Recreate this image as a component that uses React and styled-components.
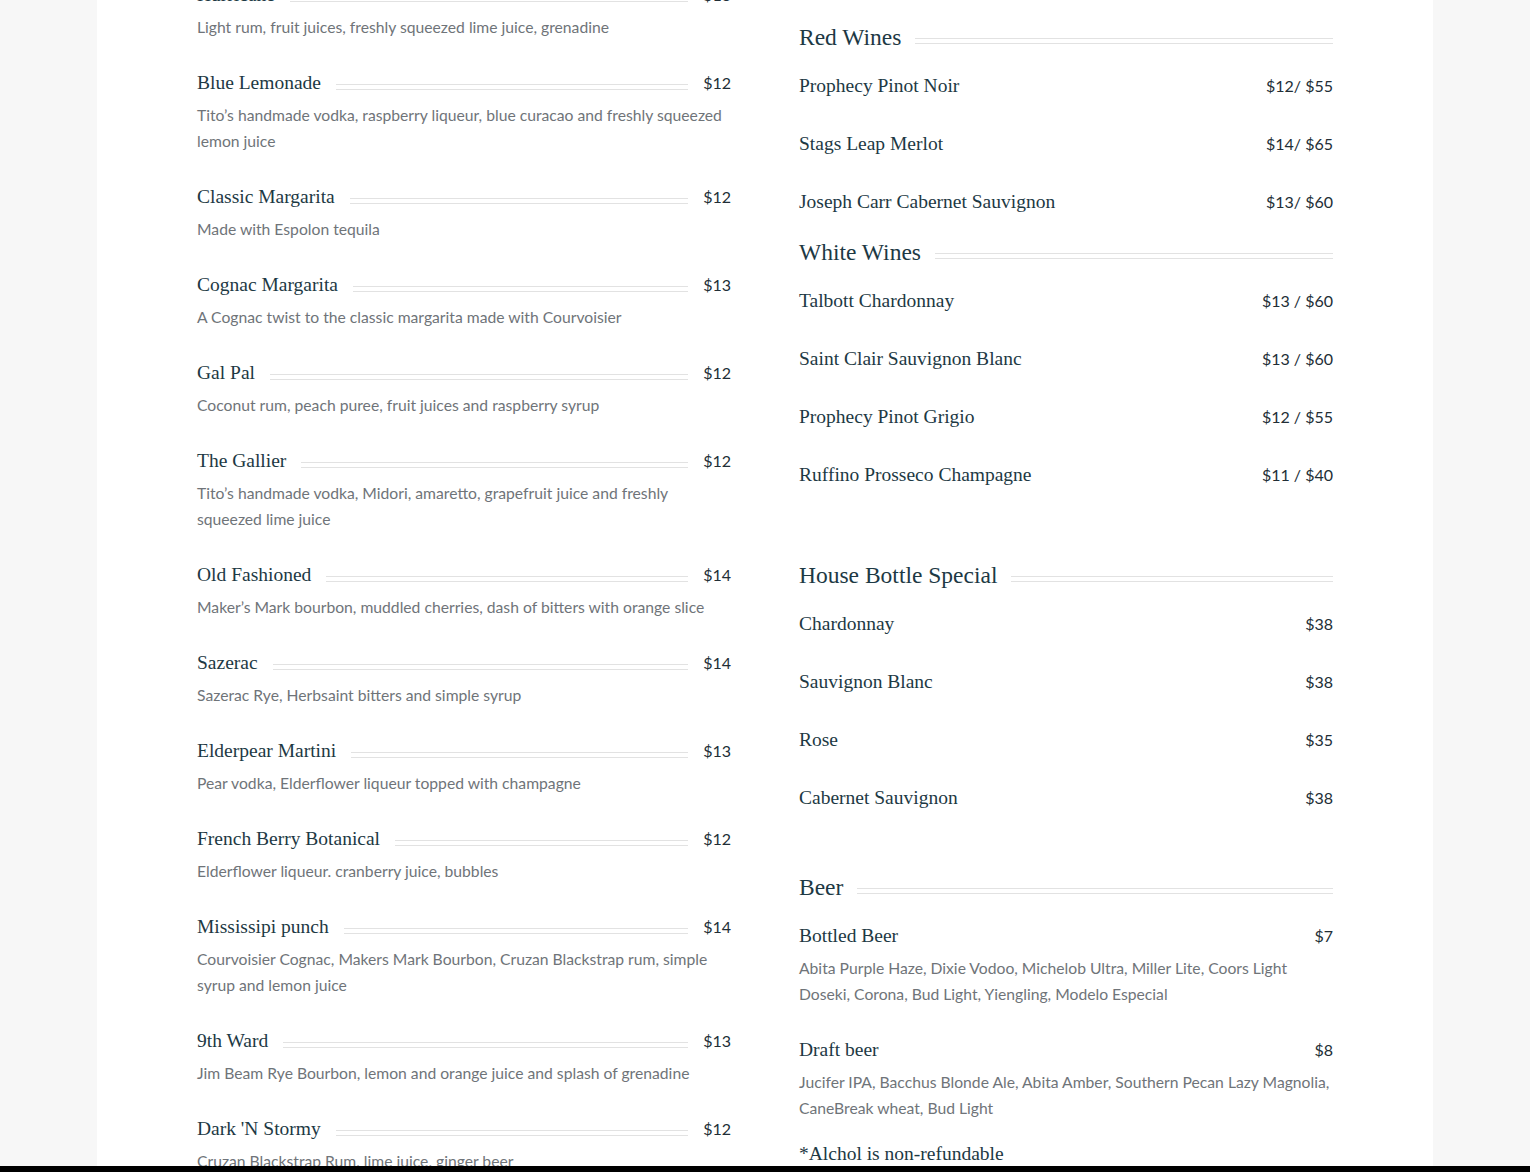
import React from 'react';
import styled, { createGlobalStyle } from 'styled-components';

const GlobalStyle = createGlobalStyle`
  html, body {
    margin: 0;
    padding: 0;
    background: #f7f7f7;
  }
  * {
    box-sizing: border-box;
  }
`;

const Viewport = styled.div`
  height: 1166px;
  overflow: hidden;
`;

const Card = styled.main`
  width: 1336px;
  min-height: 100%;
  margin: 0 auto;
  padding: 0 100px;
  background: #ffffff;
`;

const Columns = styled.div`
  display: grid;
  grid-template-columns: 1fr 1fr;
  column-gap: 68px;
  /* page is scrolled a little past the top */
  margin-top: -20px;
`;

const Column = styled.div`
  display: flex;
  flex-direction: column;
  padding-top: ${(p) => p.$offset || 0}px;
`;

const Section = styled.section`
  margin-top: ${(p) => p.$space || 0}px;
`;

const Heading = styled.div`
  display: flex;
  align-items: center;
  margin-bottom: 16px;
  height: 36px;
`;

const HeadingText = styled.h2`
  margin: 0;
  font-family: 'Liberation Serif', 'Times New Roman', serif;
  font-weight: 400;
  font-size: 23.5px;
  line-height: 36px;
  color: #1d3944;
  white-space: nowrap;
`;

const Leader = styled.span`
  flex: 1;
  height: 6px;
  margin: 8px 15px 0 ${(p) => (p.$heading ? 14 : 15)}px;
  border-top: ${(p) => (p.$plain ? 'none' : '1px solid #e2e2e2')};
  border-bottom: ${(p) => (p.$plain ? 'none' : '1px solid #e2e2e2')};
  ${(p) => p.$heading && 'margin-right: 0;'}
`;

const Item = styled.div`
  margin-bottom: 28px;
  &:last-child {
    margin-bottom: 0;
  }
`;

const NameRow = styled.div`
  display: flex;
  align-items: center;
  height: 30px;
`;

const Name = styled.h3`
  margin: 0;
  font-family: 'Liberation Serif', 'Times New Roman', serif;
  font-weight: 400;
  font-size: 19.5px;
  line-height: 30px;
  color: #1d3944;
  white-space: nowrap;
`;

const Price = styled.span`
  font-family: Lato, 'Liberation Sans', sans-serif;
  font-size: 16px;
  line-height: 30px;
  color: #222e36;
  white-space: nowrap;
`;

const Description = styled.p`
  margin: 4px 0 0;
  font-family: Lato, 'Liberation Sans', sans-serif;
  font-size: 15.7px;
  line-height: 26px;
  color: #6f7479;
`;

const Note = styled.p`
  margin: 18px 0 0;
  font-family: 'Liberation Serif', 'Times New Roman', serif;
  font-size: 19.5px;
  line-height: 30px;
  color: #1d3944;
`;

const Footer = styled.footer`
  height: 6px;
  background: #000000;
`;

const cocktails = [
  { name: 'Hurricane', price: '$13', desc: 'Light rum, fruit juices, freshly squeezed lime juice, grenadine' },
  { name: 'Blue Lemonade', price: '$12', desc: 'Tito’s handmade vodka, raspberry liqueur, blue curacao and freshly squeezed lemon juice' },
  { name: 'Classic Margarita', price: '$12', desc: 'Made with Espolon tequila' },
  { name: 'Cognac Margarita', price: '$13', desc: 'A Cognac twist to the classic margarita made with Courvoisier' },
  { name: 'Gal Pal', price: '$12', desc: 'Coconut rum, peach puree, fruit juices and raspberry syrup' },
  { name: 'The Gallier', price: '$12', desc: 'Tito’s handmade vodka, Midori, amaretto, grapefruit juice and freshly squeezed lime juice' },
  { name: 'Old Fashioned', price: '$14', desc: 'Maker’s Mark bourbon, muddled cherries, dash of bitters with orange slice' },
  { name: 'Sazerac', price: '$14', desc: 'Sazerac Rye, Herbsaint bitters and simple syrup' },
  { name: 'Elderpear Martini', price: '$13', desc: 'Pear vodka, Elderflower liqueur topped with champagne' },
  { name: 'French Berry Botanical', price: '$12', desc: 'Elderflower liqueur. cranberry juice, bubbles' },
  { name: 'Mississipi punch', price: '$14', desc: 'Courvoisier Cognac, Makers Mark Bourbon, Cruzan Blackstrap rum, simple syrup and lemon juice' },
  { name: '9th Ward', price: '$13', desc: 'Jim Beam Rye Bourbon, lemon and orange juice and splash of grenadine' },
  { name: "Dark 'N Stormy", price: '$12', desc: 'Cruzan Blackstrap Rum, lime juice, ginger beer' },
];

const sections = [
  {
    title: 'Red Wines',
    space: 0,
    items: [
      { name: 'Prophecy Pinot Noir', price: '$12/ $55' },
      { name: 'Stags Leap Merlot', price: '$14/ $65' },
      { name: 'Joseph Carr Cabernet Sauvignon', price: '$13/ $60' },
    ],
  },
  {
    title: 'White Wines',
    space: 17,
    items: [
      { name: 'Talbott Chardonnay', price: '$13 / $60' },
      { name: 'Saint Clair Sauvignon Blanc', price: '$13 / $60' },
      { name: 'Prophecy Pinot Grigio', price: '$12 / $55' },
      { name: 'Ruffino Prosseco Champagne', price: '$11 / $40' },
    ],
  },
  {
    title: 'House Bottle Special',
    space: 67,
    items: [
      { name: 'Chardonnay', price: '$38' },
      { name: 'Sauvignon Blanc', price: '$38' },
      { name: 'Rose', price: '$35' },
      { name: 'Cabernet Sauvignon', price: '$38' },
    ],
  },
  {
    title: 'Beer',
    space: 56,
    items: [
      {
        name: 'Bottled Beer',
        price: '$7',
        desc: 'Abita Purple Haze, Dixie Vodoo, Michelob Ultra, Miller Lite, Coors Light Doseki, Corona, Bud Light, Yiengling, Modelo Especial',
      },
      {
        name: 'Draft beer',
        price: '$8',
        desc: 'Jucifer IPA, Bacchus Blonde Ale, Abita Amber, Southern Pecan Lazy Magnolia, CaneBreak wheat, Bud Light',
      },
    ],
  },
];

const MenuItem = ({ item, plain }) => (
  <Item>
    <NameRow>
      <Name>{item.name}</Name>
      <Leader $plain={plain} />
      <Price>{item.price}</Price>
    </NameRow>
    {item.desc && <Description>{item.desc}</Description>}
  </Item>
);

const App = () => {
  return (
    <>
      <GlobalStyle />
      <Viewport>
        <Card>
          <Columns>
            <Column>
              {cocktails.map((item, index) => (
                <MenuItem key={index} item={item} />
              ))}
            </Column>
            <Column $offset={39}>
              {sections.map((section) => (
                <Section key={section.title} $space={section.space}>
                  <Heading>
                    <HeadingText>{section.title}</HeadingText>
                    <Leader $heading />
                  </Heading>
                  {section.items.map((item, index) => (
                    <MenuItem key={index} item={item} plain />
                  ))}
                </Section>
              ))}
              <Note>*Alchol is non-refundable</Note>
            </Column>
          </Columns>
        </Card>
      </Viewport>
      <Footer />
    </>
  );
};

export default App;
